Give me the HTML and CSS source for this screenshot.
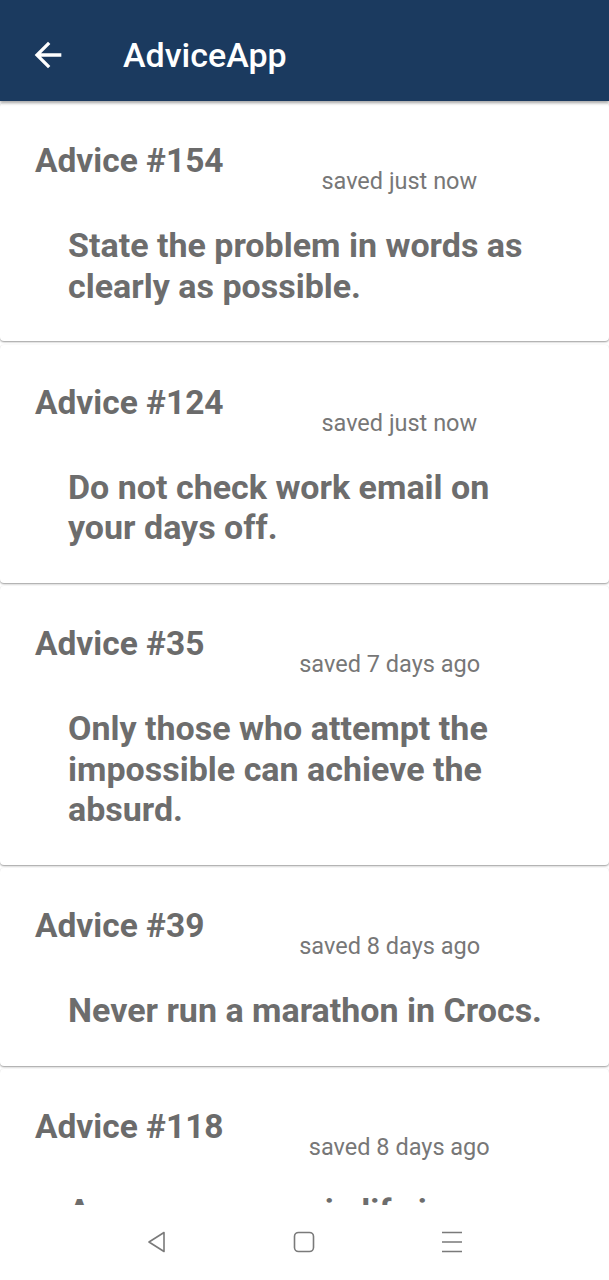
FILE: index.html
```html
<!DOCTYPE html>
<html>
<head>
<meta charset="utf-8">
<link rel="stylesheet" href="styles.css">
</head>
<body>
<header class="appbar">
  <svg class="back" width="40" height="40" viewBox="0 0 24 24"><path d="M20 11H7.83l5.59-5.59L12 4l-8 8 8 8 1.41-1.41L7.83 13H20v-2z" fill="#fff"/></svg>
  <h1 class="apptitle">AdviceApp</h1>
</header>
<main class="list">
  <section class="card">
    <div class="card-head"><h2 class="card-title">Advice #154</h2><span class="card-date">saved just now</span></div>
    <p class="advice">State the problem in words as clearly as possible.</p>
  </section>
  <section class="card">
    <div class="card-head"><h2 class="card-title">Advice #124</h2><span class="card-date">saved just now</span></div>
    <p class="advice">Do not check work email on your days off.</p>
  </section>
  <section class="card">
    <div class="card-head"><h2 class="card-title">Advice #35</h2><span class="card-date">saved 7 days ago</span></div>
    <p class="advice">Only those who attempt the impossible can achieve the absurd.</p>
  </section>
  <section class="card">
    <div class="card-head"><h2 class="card-title">Advice #39</h2><span class="card-date">saved 8 days ago</span></div>
    <p class="advice">Never run a marathon in Crocs.</p>
  </section>
  <section class="card">
    <div class="card-head"><h2 class="card-title">Advice #118</h2><span class="card-date">saved 8 days ago</span></div>
    <p class="advice">A common error in life is worrying too much.</p>
  </section>
</main>
<nav class="sysnav">
  <svg width="20" height="22" viewBox="0 0 20 22"><path d="M17 1.5 L2 11 L17 20.5 Z" fill="none" stroke="#7a7a7a" stroke-width="1.6" stroke-linejoin="round"/></svg>
  <svg width="22" height="22" viewBox="0 0 22 22"><rect x="1.5" y="1.5" width="19" height="19" rx="4" fill="none" stroke="#7a7a7a" stroke-width="1.6"/></svg>
  <svg width="22" height="22" viewBox="0 0 22 22"><path d="M1 1.5h20M1 11h20M1 20.5h20" stroke="#7a7a7a" stroke-width="1.6"/></svg>
</nav>
</body>
</html>
```
FILE: styles.css
```css
* { box-sizing: border-box; }
html, body { margin: 0; padding: 0; }
body {
  font-family: Roboto, "Noto Sans", sans-serif;
  background: #ffffff;
  width: 609px;
  min-height: 1280px;
  overflow: hidden;
}
.appbar {
  height: 101px;
  background: #1b3a5f;
  display: flex;
  align-items: center;
  padding: 8px 0 0 28px;
  box-shadow: 0 2px 3px rgba(0,0,0,0.35);
  position: relative;
  z-index: 2;
}
.back { display: block; }
.apptitle {
  margin: 0 0 0 55px;
  color: #fff;
  font-size: 34px;
  font-weight: 500;
  letter-spacing: 0;
}
.list {
  display: flex;
  flex-direction: column;
  gap: 3.5px;
  padding-top: 2px;
}
.card {
  background: #fff;
  border-radius: 4px;
  box-shadow: 0 1px 2px rgba(0,0,0,0.4);
  padding: 39px 34px 35px 35px;
}
.card-head {
  display: flex;
  align-items: flex-start;
}
.card-title {
  margin: 0;
  font-size: 33.5px;
  line-height: 38px;
  font-weight: 700;
  color: #6b6b6b;
}
.card-date {
  flex: 1;
  text-align: center;
  margin-top: 25px;
  font-size: 23.5px;
  line-height: 28px;
  color: #777777;
}
.advice {
  margin: 30px 26px 0 33px;
  font-size: 34px;
  line-height: 40.5px;
  font-weight: 700;
  color: #6d6d6d;
}
.sysnav {
  position: fixed;
  left: 0;
  right: 0;
  bottom: 0;
  height: 75px;
  background: #fff;
  display: flex;
  justify-content: center;
  align-items: center;
  gap: 126px;
  padding-bottom: 2px;
}
.sysnav svg { display: block; }
```
